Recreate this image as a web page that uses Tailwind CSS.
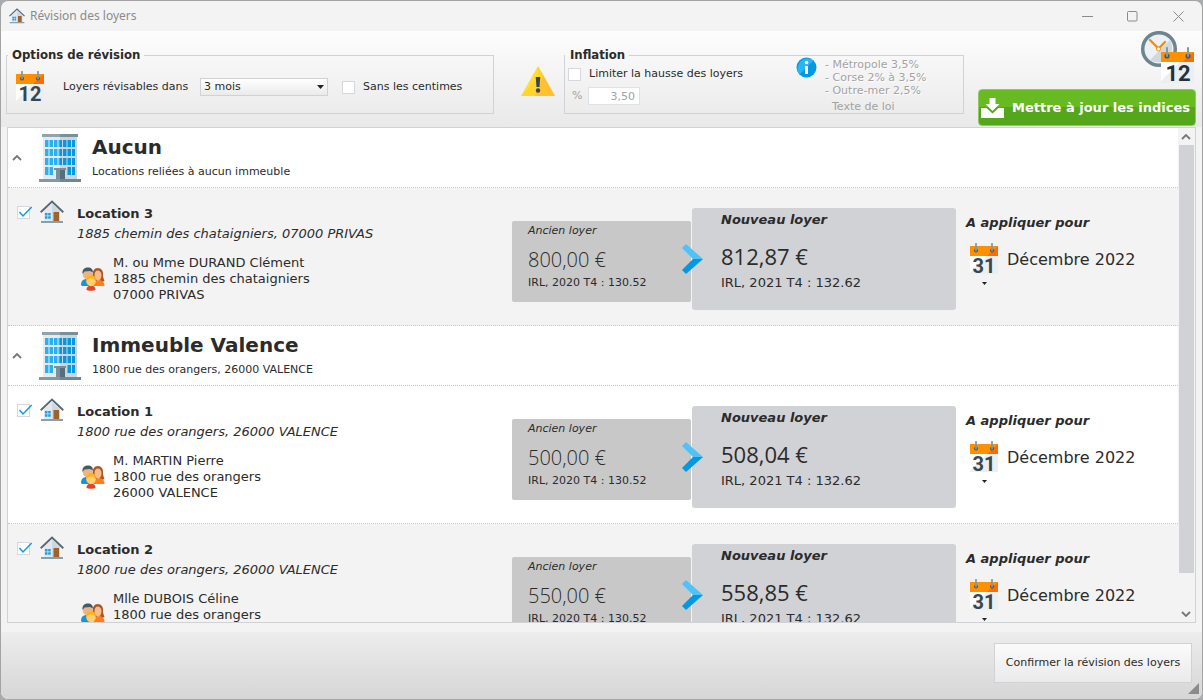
<!DOCTYPE html>
<html lang="fr">
<head>
<meta charset="utf-8">
<meta name="viewport" content="width=device-width, initial-scale=1">
<title>Révision des loyers</title>
<script src="https://cdn.jsdelivr.net/npm/@tailwindcss/browser@4"></script>
</head>
<body class="h-screen overflow-hidden bg-[#a9abad] font-['DejaVu_Sans',Verdana,sans-serif] text-[#2b2b2b]">

<svg class="hidden" aria-hidden="true">
  <symbol id="home" viewBox="0 0 24 24">
    <path d="M4 11 12 4l8 7v11H4z" fill="#e4e8ea"/><path d="M12 4l8 7v11h-8z" fill="#d0d6da"/>
    <path d="M1 21h22v2H1z" fill="#8d9ea6"/>
    <path d="M0.700 12.200 12 1.600l11.300 10.600" fill="none" stroke="#546a76" stroke-width="1.900"/>
    <path d="M13.500 12h5.500v9h-5.500z" fill="#a0622d"/>
    <path d="M4.500 12.500h6v6h-6z" fill="#cfe6f3"/>
    <path d="M5 13h2.500v2.500H5zM8.200 13h2.500v2.500H8.200zM5 16.200h2.500v2.500H5zM8.200 16.200h2.500v2.500H8.200z" fill="#1f9fe0"/>
  </symbol>
  <symbol id="building" viewBox="0 0 42 48">
    <path d="M4 3h34v43H4z" fill="#e6eaec"/><path d="M21 3h17v43H21z" fill="#cdd5da"/>
    <path d="M3 0h18v3H3z" fill="#90a4ae"/><path d="M21 0h18v3H21z" fill="#78909c"/>
    <path d="M6 6h3.500v7H6zM10.500 6H14v7h-3.500zM15 6h3.500v7H15zM19.500 6H21v7h-1.500zM6 15h3.500v7H6zM10.500 15H14v7h-3.500zM15 15h3.500v7H15zM19.500 15H21v7h-1.500zM6 24h3.500v7H6zM10.500 24H14v7h-3.500zM15 24h3.500v7H15zM19.500 24H21v7h-1.500zM6 33h3.500v8H6zM10.500 33H14v8h-3.500z" fill="#29b0f3"/>
    <path d="M21 6h2v7h-2zM24 6h3.500v7H24zM28.500 6H32v7h-3.500zM33 6h3v7h-3zM21 15h2v7h-2zM24 15h3.500v7H24zM28.500 15H32v7h-3.500zM33 15h3v7h-3zM21 24h2v7h-2zM24 24h3.500v7H24zM28.500 24H32v7h-3.500zM33 24h3v7h-3zM28.500 33H32v8h-3.500zM33 33h3v8h-3z" fill="#0398e2"/>
    <path d="M15 34h12v2H15z" fill="#78909c"/><path d="M17 36h4v10h-4z" fill="#78909c"/><path d="M21 36h5v10h-5z" fill="#566f7b"/>
    <path d="M0 45h21v3H0z" fill="#8298a3"/><path d="M21 45h21v3H21z" fill="#6f8793"/>
  </symbol>
  <symbol id="people" viewBox="0 0 24 24">
    <path d="M0 18c0-4 2-6 6-6s5 2 5 6l-2 1H1z" fill="#1596d8"/>
    <path d="M11.500 9c0-5 1.700-8 5.300-8s5.700 3 5.200 7c0 3 1 4 1.500 6l-5 2-6-1z" fill="#a9581f"/>
    <path d="M12.500 19c0-4 2-6 5-6s6 1.500 6 6z" fill="#ff7d1a"/>
    <circle cx="6.800" cy="7.500" r="5" fill="#f0b57f"/>
    <path d="M1.500 7C1 3 3 .5 6.800.5 10.500.5 12 2.500 12 5.500L9 4 3.500 4.500z" fill="#455a64"/>
    <path d="M13.500 8c0-3 1.500-4.500 3.300-4.500s3.700 1.500 3.700 4.500-1.500 5.500-3.500 5.500-3.500-2.500-3.500-5.500z" fill="#f6bd8b"/>
    <path d="M5.500 23c0-3 1.500-4.500 4.500-4.500s4.500 1.500 4.500 4.500c-2 1-7 1-9 0z" fill="#e0452b"/>
    <circle cx="10" cy="14.500" r="4.700" fill="#ffcf70"/>
    <path d="M5 14.500c0-4.500 2-6.300 5-6.300s5 1.800 5 6.300c-1-2-3-3.500-4.500-3-2.500-.5-4.500 1-5.500 3z" fill="#ffb21a"/>
  </symbol>
  <symbol id="calendar" viewBox="0 0 28 32">
    <path d="M0 13h28v18H0z" fill="#eceef1"/><path d="M0 13h17L0 30z" fill="#fff"/>
    <path d="M0 3h28v10H0z" fill="#ff9100"/><path d="M28 3v10H17z" fill="#ff6d00"/>
    <circle cx="6" cy="7.500" r="2" fill="#455a64"/><circle cx="22" cy="7.500" r="2" fill="#455a64"/>
    <path d="M6 .8V7.500M22 .8V7.500" stroke="#8299a4" stroke-width="1.800" stroke-linecap="round"/>
  </symbol>
  <symbol id="chevron" viewBox="0 0 21 30">
    <path d="M0 4 4 0l17 15H11z" fill="#4fc3f7"/><path d="M11 15h10L4 30l-4-4z" fill="#0398e2"/>
  </symbol>
  <symbol id="up" viewBox="0 0 10 6"><path d="M1 5l4-4 4 4" fill="none" stroke="#777" stroke-width="1.800"/></symbol>
  <symbol id="tick" viewBox="0 0 15 12"><path d="M1.500 6 5 10 13.700 1" fill="none" stroke="#0f9be6" stroke-width="1.500"/></symbol>
</svg>

<div class="flex h-full flex-col overflow-hidden rounded-lg border border-[#a3a3a3] bg-[#f3f3f3]">

  <header class="flex h-[30px] shrink-0 items-center pr-px pl-2">
    <svg class="size-4"><use href="#home"/></svg>
    <h1 class="ml-[5px] flex-1 font-['Noto_Sans',sans-serif] text-[12px] text-[#8b8b8b]">Révision des loyers</h1>
    <button aria-label="Réduire" class="flex w-[46px] justify-center"><svg class="size-[11px]" viewBox="0 0 11 11"><path d="M0 5.500h11" stroke="#8b8b8b"/></svg></button>
    <button aria-label="Agrandir" class="flex w-[45px] justify-center"><svg class="size-[11px]" viewBox="0 0 11 11"><rect x=".5" y=".5" width="9.500" height="9.500" rx="1" fill="none" stroke="#8b8b8b"/></svg></button>
    <button aria-label="Fermer" class="flex w-[46px] justify-center"><svg class="size-[11px]" viewBox="0 0 11 11"><path d="M.5.500l10 10M10.500.500l-10 10" stroke="#8b8b8b"/></svg></button>
  </header>

  <main class="flex min-h-0 flex-1 flex-col">
    <section class="flex h-[96px] shrink-0 bg-linear-to-b from-[#fdfdfd] to-[#e9e9e9] pl-[5px] pr-[6px] text-[11px]">
      <fieldset class="mt-4 h-[67px] w-[488px] border border-[#d1d2d6] pl-[9px]">
        <legend class="-ml-2 px-1 font-['DejaVu_Sans_Condensed','DejaVu_Sans',sans-serif] text-[13px] leading-4 font-bold">Options de révision</legend>
        <div class="flex h-12 items-center">
          <span class="relative block h-8 w-7">
            <svg class="h-8 w-7"><use href="#calendar"/></svg>
            <span class="absolute inset-x-0 top-[13px] text-center font-['Roboto',sans-serif] text-[20px] leading-5 font-bold text-[#37474f]">12</span>
          </span>
          <label for="delay" class="ml-[19px] w-[137px]">Loyers révisables dans</label>
          <span class="relative block h-[18px] w-32">
            <select id="delay" class="size-full appearance-none border border-[#d1d2d6] bg-linear-to-b from-white to-[#eaeaea] pl-[3px] leading-4"><option>3 mois</option></select>
            <svg class="pointer-events-none absolute top-[7px] right-1 h-1 w-[7px]" viewBox="0 0 7 4"><path d="M0 0h7L3.500 4z" fill="#222"/></svg>
          </span>
          <input id="cents" type="checkbox" class="ml-[14px] size-[13px] appearance-none border border-[#d6d8de] bg-white">
          <label for="cents" class="ml-2">Sans les centimes</label>
        </div>
      </fieldset>

      <svg class="mt-[35px] ml-[27px] h-[31px] w-[34px] shrink-0" viewBox="0 0 34 31">
        <path d="M17 0 0 30h17z" fill="#ffdd33"/><path d="M17 0l17 30H0L17 12z" fill="#ffd42e"/><path d="M17 0l17 30H14L22 10z" fill="#ffc22e"/>
        <path d="M14.700 11h4.600l-.8 10h-3z" fill="#37474f"/><circle cx="17" cy="24.500" r="2.200" fill="#37474f"/>
      </svg>

      <fieldset class="mt-4 ml-[9px] h-[67px] w-[400px] border border-[#d1d2d6]">
        <legend class="pr-1 pl-[5px] font-['DejaVu_Sans_Condensed','DejaVu_Sans',sans-serif] text-[13px] leading-4 font-bold">Inflation</legend>
        <div class="flex h-[50px] items-start pl-[3px]">
          <div class="w-[228px] pt-1">
            <div class="flex h-[14px] items-center"><input id="limit" type="checkbox" class="size-[13px] appearance-none border border-[#d6d8de] bg-white"><label for="limit" class="ml-2">Limiter la hausse des loyers</label></div>
            <div class="mt-[6px] flex items-center pl-1 text-[#a3a3a3]"><label for="pct" class="w-4">%</label><input id="pct" value="3,50" disabled class="h-[18px] w-[52px] border border-[#e0e1e5] bg-white pr-1 text-right"></div>
          </div>
          <svg class="mt-[-6px] size-[21px]" viewBox="0 0 21 21"><circle cx="10.500" cy="10.500" r="10" fill="#0398e2"/><path d="M3.500 17.500A10 10 0 0 1 17.500 3.500z" fill="#29b6f6"/><path d="M9 9h3v8H9z" fill="#fff"/><circle cx="10.500" cy="5.500" r="1.800" fill="#fff"/></svg>
          <div class="mt-[-5px] ml-2 leading-[13px] text-[#a3a3a3] [text-shadow:1px_1px_0_#fff]">
            <ul><li>- Métropole 3,5%</li><li>- Corse 2% à 3,5%</li><li>- Outre-mer 2,5%</li></ul>
            <button class="mt-[3px] block pl-[7px] leading-[13px]" disabled>Texte de loi</button>
          </div>
        </div>
      </fieldset>

      <div class="flex flex-1 flex-col items-end">
        <svg class="mr-px h-[53px] w-[55px] shrink-0" viewBox="0 0 55 53">
          <circle cx="19" cy="18" r="16.300" fill="#eef1f3" stroke="#6d8590" stroke-width="3.500"/>
          <path d="M30 9A14.500 14.500 0 0 1 10 29z" fill="#cfd8dc"/>
          <path d="M10 9l8.500 8.500L25 11" fill="none" stroke="#ff8a00" stroke-width="2.400" stroke-linecap="round"/><circle cx="18.500" cy="18" r="2" fill="#fff" stroke="#ff8a00"/>
          <path d="M21 30h33v22H21z" fill="#eceef1"/><path d="M21 30h20L21 50z" fill="#fff"/>
          <path d="M21 21h33v10H21z" fill="#ff9100"/><path d="M54 21v10H42z" fill="#ff6d00"/>
          <circle cx="27" cy="25" r="2.600" fill="#455a64"/><circle cx="48" cy="25" r="2.600" fill="#455a64"/>
          <path d="M27 17v8M48 17v8" stroke="#8299a4" stroke-width="2" stroke-linecap="round"/>
          <text x="38" y="50" text-anchor="middle" font-family="Roboto, sans-serif" font-size="22" font-weight="700" fill="#263238">12</text>
        </svg>
        <button class="mt-[5px] flex h-[37px] w-[218px] items-center rounded-sm border border-[#8ccb5a] bg-linear-to-b from-[#68ba22] from-50% to-[#54a61a] to-50% pl-[2px] text-[13px] font-bold text-white">
          <svg class="h-5 w-[23px]" viewBox="0 0 23 20"><path d="M0 10h5.500l6 5.500 6-5.500H23v10H0z" fill="#fff"/><path d="M8.500 0h6v6h4L11.500 13 4.500 6h4z" fill="#fff"/></svg>
          <span class="ml-2 pt-px">Mettre à jour les indices</span>
        </button>
      </div>
    </section>

    <section class="mx-[6px] mb-[9px] flex min-h-0 flex-1 border border-[#d1d2d6] bg-white">
      <div class="min-w-0 flex-1 overflow-hidden text-[13px]">

        <div class="flex h-[60px] items-center border-b border-dotted border-[#c8c8c8] pl-1">
          <button aria-label="Replier Aucun"><svg class="h-[6px] w-[10px]"><use href="#up"/></svg></button>
          <svg class="ml-[17px] h-12 w-[42px]"><use href="#building"/></svg>
          <div class="ml-[11px]"><h2 class="text-[20px] leading-6 font-bold">Aucun</h2><p class="mt-[5px] text-[11px] leading-4">Locations reliées à aucun immeuble</p></div>
        </div>

        <article class="flex h-[138px] border-b border-dotted border-[#c8c8c8] bg-[#f3f3f3] pl-[9px]">
          <span class="relative mt-[18px] block size-[13px]"><input type="checkbox" checked aria-label="Location 3" class="peer block size-[13px] appearance-none border border-[#d6d8de] bg-white"><svg class="pointer-events-none absolute top-0 left-px hidden h-3 w-[15px] peer-checked:block"><use href="#tick"/></svg></span>
          <svg class="mt-3 ml-[10px] size-6"><use href="#home"/></svg>
          <div class="ml-[13px] flex-1 pt-4">
            <h3 class="leading-5 font-bold">Location 3</h3>
            <p class="leading-5 italic">1885 chemin des chataigniers, 07000 PRIVAS</p>
            <div class="mt-[11px] flex items-center pl-1"><svg class="size-6"><use href="#people"/></svg><p class="ml-2 leading-4">M. ou Mme DURAND Clément<br>1885 chemin des chataigniers<br>07000 PRIVAS</p></div>
          </div>
          <div class="relative mt-[33px] h-[81px] w-[179px] rounded-xs bg-[#c8c8c8] pl-4 text-[11px]">
            <h4 class="pt-[2px] leading-4 italic">Ancien loyer</h4>
            <p class="mt-[9px] font-['Open_Sans',sans-serif] text-[20px] leading-6 font-light">800,00 €</p>
            <p class="mt-[3px] leading-4">IRL, 2020 T4 : 130.52</p>
            <svg class="absolute top-[23px] -right-3 z-10 h-[30px] w-[21px]"><use href="#chevron"/></svg>
          </div>
          <div class="mt-5 ml-px h-[102px] w-[264px] rounded-[3px] bg-[#d1d2d6] pl-[29px]">
            <h4 class="pt-1 leading-4 font-bold italic">Nouveau loyer</h4>
            <p class="mt-[14px] font-['Open_Sans',sans-serif] text-[22px] leading-7">812,87 €</p>
            <p class="mt-[5px] leading-4">IRL, 2021 T4 : 132.62</p>
          </div>
          <div class="w-[222px] pt-[27px] pl-[10px]">
            <h4 class="leading-4 font-bold italic">A appliquer pour</h4>
            <button class="mt-[11px] flex items-center pl-1 text-left">
              <span class="relative block h-8 w-7"><svg class="h-8 w-7"><use href="#calendar"/></svg><span class="absolute inset-x-0 top-[13px] text-center font-['Roboto',sans-serif] text-[20px] leading-5 font-bold text-[#37474f]">31</span></span>
              <span class="ml-[9px] pt-[2px] text-[16px] leading-8">Décembre 2022</span>
            </button>
            <svg class="mt-[6px] ml-4 h-[3px] w-[5px]" viewBox="0 0 5 3"><path d="M0 0h5L2.500 3z" fill="#222"/></svg>
          </div>
        </article>

        <div class="flex h-[60px] items-center border-b border-dotted border-[#c8c8c8] pl-1">
          <button aria-label="Replier Immeuble Valence"><svg class="h-[6px] w-[10px]"><use href="#up"/></svg></button>
          <svg class="ml-[17px] h-12 w-[42px]"><use href="#building"/></svg>
          <div class="ml-[11px]"><h2 class="text-[20px] leading-6 font-bold">Immeuble Valence</h2><p class="mt-[5px] text-[11px] leading-4">1800 rue des orangers, 26000 VALENCE</p></div>
        </div>

        <article class="flex h-[138px] border-b border-dotted border-[#c8c8c8] bg-white pl-[9px]">
          <span class="relative mt-[18px] block size-[13px]"><input type="checkbox" checked aria-label="Location 1" class="peer block size-[13px] appearance-none border border-[#d6d8de] bg-white"><svg class="pointer-events-none absolute top-0 left-px hidden h-3 w-[15px] peer-checked:block"><use href="#tick"/></svg></span>
          <svg class="mt-3 ml-[10px] size-6"><use href="#home"/></svg>
          <div class="ml-[13px] flex-1 pt-4">
            <h3 class="leading-5 font-bold">Location 1</h3>
            <p class="leading-5 italic">1800 rue des orangers, 26000 VALENCE</p>
            <div class="mt-[11px] flex items-center pl-1"><svg class="size-6"><use href="#people"/></svg><p class="ml-2 leading-4">M. MARTIN Pierre<br>1800 rue des orangers<br>26000 VALENCE</p></div>
          </div>
          <div class="relative mt-[33px] h-[81px] w-[179px] rounded-xs bg-[#c8c8c8] pl-4 text-[11px]">
            <h4 class="pt-[2px] leading-4 italic">Ancien loyer</h4>
            <p class="mt-[9px] font-['Open_Sans',sans-serif] text-[20px] leading-6 font-light">500,00 €</p>
            <p class="mt-[3px] leading-4">IRL, 2020 T4 : 130.52</p>
            <svg class="absolute top-[23px] -right-3 z-10 h-[30px] w-[21px]"><use href="#chevron"/></svg>
          </div>
          <div class="mt-5 ml-px h-[102px] w-[264px] rounded-[3px] bg-[#d1d2d6] pl-[29px]">
            <h4 class="pt-1 leading-4 font-bold italic">Nouveau loyer</h4>
            <p class="mt-[14px] font-['Open_Sans',sans-serif] text-[22px] leading-7">508,04 €</p>
            <p class="mt-[5px] leading-4">IRL, 2021 T4 : 132.62</p>
          </div>
          <div class="w-[222px] pt-[27px] pl-[10px]">
            <h4 class="leading-4 font-bold italic">A appliquer pour</h4>
            <button class="mt-[11px] flex items-center pl-1 text-left">
              <span class="relative block h-8 w-7"><svg class="h-8 w-7"><use href="#calendar"/></svg><span class="absolute inset-x-0 top-[13px] text-center font-['Roboto',sans-serif] text-[20px] leading-5 font-bold text-[#37474f]">31</span></span>
              <span class="ml-[9px] pt-[2px] text-[16px] leading-8">Décembre 2022</span>
            </button>
            <svg class="mt-[6px] ml-4 h-[3px] w-[5px]" viewBox="0 0 5 3"><path d="M0 0h5L2.500 3z" fill="#222"/></svg>
          </div>
        </article>

        <article class="flex h-[138px] border-b border-dotted border-[#c8c8c8] bg-[#f3f3f3] pl-[9px]">
          <span class="relative mt-[18px] block size-[13px]"><input type="checkbox" checked aria-label="Location 2" class="peer block size-[13px] appearance-none border border-[#d6d8de] bg-white"><svg class="pointer-events-none absolute top-0 left-px hidden h-3 w-[15px] peer-checked:block"><use href="#tick"/></svg></span>
          <svg class="mt-3 ml-[10px] size-6"><use href="#home"/></svg>
          <div class="ml-[13px] flex-1 pt-4">
            <h3 class="leading-5 font-bold">Location 2</h3>
            <p class="leading-5 italic">1800 rue des orangers, 26000 VALENCE</p>
            <div class="mt-[11px] flex items-center pl-1"><svg class="size-6"><use href="#people"/></svg><p class="ml-2 leading-4">Mlle DUBOIS Céline<br>1800 rue des orangers<br>26000 VALENCE</p></div>
          </div>
          <div class="relative mt-[33px] h-[81px] w-[179px] rounded-xs bg-[#c8c8c8] pl-4 text-[11px]">
            <h4 class="pt-[2px] leading-4 italic">Ancien loyer</h4>
            <p class="mt-[9px] font-['Open_Sans',sans-serif] text-[20px] leading-6 font-light">550,00 €</p>
            <p class="mt-[3px] leading-4">IRL, 2020 T4 : 130.52</p>
            <svg class="absolute top-[23px] -right-3 z-10 h-[30px] w-[21px]"><use href="#chevron"/></svg>
          </div>
          <div class="mt-5 ml-px h-[102px] w-[264px] rounded-[3px] bg-[#d1d2d6] pl-[29px]">
            <h4 class="pt-1 leading-4 font-bold italic">Nouveau loyer</h4>
            <p class="mt-[14px] font-['Open_Sans',sans-serif] text-[22px] leading-7">558,85 €</p>
            <p class="mt-[5px] leading-4">IRL, 2021 T4 : 132.62</p>
          </div>
          <div class="w-[222px] pt-[27px] pl-[10px]">
            <h4 class="leading-4 font-bold italic">A appliquer pour</h4>
            <button class="mt-[11px] flex items-center pl-1 text-left">
              <span class="relative block h-8 w-7"><svg class="h-8 w-7"><use href="#calendar"/></svg><span class="absolute inset-x-0 top-[13px] text-center font-['Roboto',sans-serif] text-[20px] leading-5 font-bold text-[#37474f]">31</span></span>
              <span class="ml-[9px] pt-[2px] text-[16px] leading-8">Décembre 2022</span>
            </button>
            <svg class="mt-[6px] ml-4 h-[3px] w-[5px]" viewBox="0 0 5 3"><path d="M0 0h5L2.500 3z" fill="#222"/></svg>
          </div>
        </article>
      </div>

      <div class="flex w-[17px] flex-col items-center bg-[#f3f3f3] pr-px">
        <button aria-label="Défiler vers le haut" class="flex h-[17px] items-center"><svg class="h-[6px] w-[10px]"><use href="#up"/></svg></button>
        <div class="flex w-[15px] flex-1 flex-col"><div class="h-[93%] bg-[#d1d2d6]"></div></div>
        <button aria-label="Défiler vers le bas" class="flex h-[17px] items-center"><svg class="h-[6px] w-[10px] rotate-180"><use href="#up"/></svg></button>
      </div>
    </section>
  </main>

  <footer class="relative flex h-[67px] shrink-0 justify-end bg-linear-to-b from-[#ededed] to-[#d6d6d6] pt-[11px] pr-[10px]">
    <button class="h-10 w-[198px] border border-[#d1d2d6] bg-linear-to-b from-[#fbfbfb] to-[#eaeaea] pt-px text-[11px]">Confirmer la révision des loyers</button>
    <svg class="absolute right-[3px] bottom-[5px] size-[11px]" viewBox="0 0 11 11"><path d="M11 0v11H0z" fill="#8b8b8b"/></svg>
  </footer>
</div>
</body>
</html>
